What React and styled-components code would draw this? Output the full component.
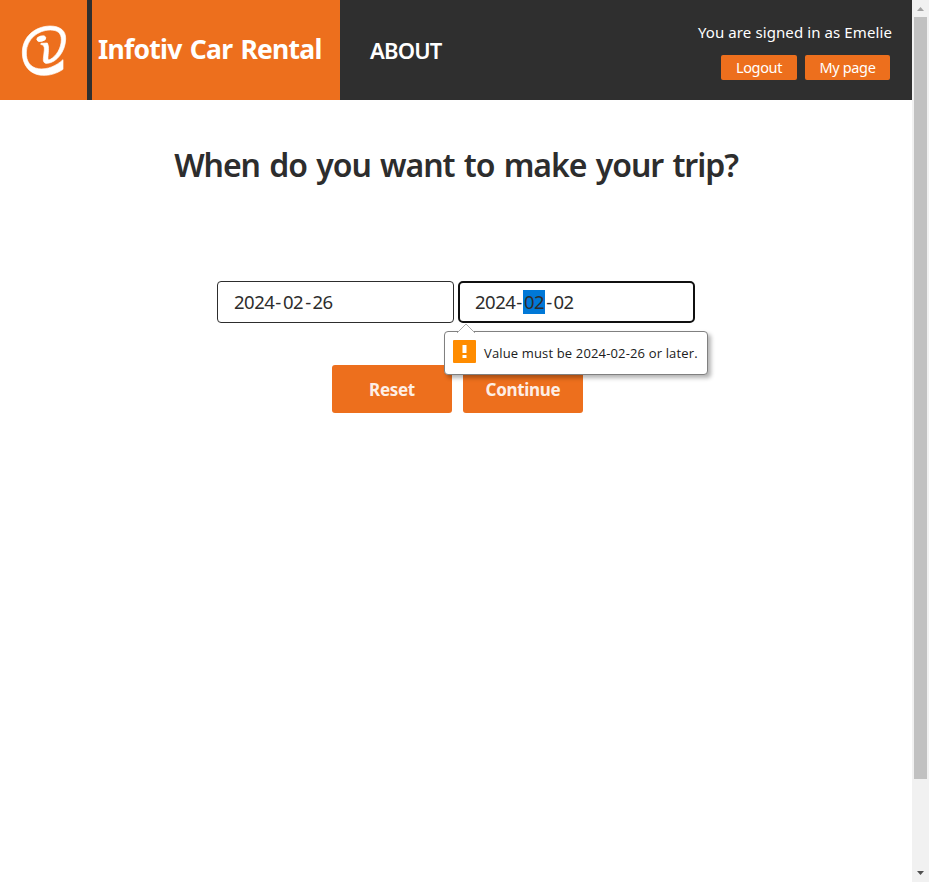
import React from "react";
import styled, { createGlobalStyle } from "styled-components";

const Global = createGlobalStyle`
  * { box-sizing: border-box; }
  body { margin: 0; background: #fff; overflow: hidden; }
  button { font: inherit; border: 0; padding: 0; margin: 0; }
`;

const Screen = styled.div`
  display: flex;
  width: 929px;
  height: 882px;
  font-family: "Trebuchet MS", "Noto Sans", sans-serif;
  color: #2d2d2d;
`;
const Page = styled.div`
  width: 912px;
  display: flex;
  flex-direction: column;
`;
const Header = styled.header`
  display: flex;
  height: 100px;
  background: #2f2f2f;
  color: #fff;
`;
const Logo = styled.div`
  width: 87px;
  height: 100px;
  margin-right: 5px;
  background: #ed6f1d;
  svg { display: block; }
`;
const Brand = styled.div`
  width: 248px;
  padding: 29px 0 0 6px;
  background: #ed6f1d;
`;
const Label = styled.span`
  display: block;
  white-space: nowrap;
  font-size: ${(p) => p.$size}px;
  line-height: ${(p) => p.$line}px;
  font-weight: ${(p) => p.$weight || 400};
  letter-spacing: ${(p) => p.$track || 0}px;
  word-spacing: ${(p) => p.$words || 0}px;
`;
const Nav = styled.nav`
  padding: 35px 0 0 30px;
  flex: 1;
`;
const Account = styled.div`
  display: flex;
  flex-direction: column;
  align-items: flex-end;
  padding: 22px 20px 0 0;
`;
const AccountActions = styled.div`
  display: flex;
  gap: 8px;
  margin: 13px 2px 0 0;
`;
const SmallButton = styled.button`
  display: flex;
  justify-content: center;
  align-items: center;
  width: ${(p) => p.$width}px;
  height: 25px;
  padding-bottom: 1px;
  border-radius: 2px;
  background: #ed6f1d;
  color: #fff;
`;
const Main = styled.main`
  display: flex;
  flex-direction: column;
  align-items: center;
`;
const Heading = styled.h1`
  margin: 45px 0 0;
  color: #2d2d2d;
`;
const Dates = styled.div`
  display: flex;
  gap: 4px;
  margin-top: 96px;
`;
const Field = styled.div`
  position: relative;
  display: flex;
  align-items: center;
  width: 237px;
  height: 42px;
  padding-left: ${(p) => (p.$focused ? 15 : 16)}px;
  border: ${(p) => (p.$focused ? "2px solid #101010" : "1px solid #2d2d2d")};
  border-radius: ${(p) => (p.$focused ? 5 : 4)}px;
`;
const DateText = styled.div`
  display: flex;
  font-size: 18.5px;
  line-height: 24px;
  letter-spacing: -0.5px;
`;
const Part = styled.span`
  width: ${(p) => p.$width}px;
  text-align: center;
  background: ${(p) => (p.$selected ? "#0078d7" : "transparent")};
`;
const Actions = styled.div`
  display: flex;
  gap: 11px;
  margin: 42px 0 0 3px;
`;
const BigButton = styled.button`
  display: flex;
  justify-content: center;
  align-items: center;
  width: 120px;
  height: 48px;
  padding-top: 2px;
  border-radius: 3px;
  background: #ed6f1d;
  color: #fdeee5;
`;
const Bubble = styled.div`
  position: absolute;
  z-index: 2;
  left: -16px;
  top: 48px;
  display: flex;
  align-items: flex-start;
  width: 264px;
  height: 44px;
  padding: 8px 0 0 8px;
  gap: 8px;
  border: 1px solid #808080;
  border-radius: 4px;
  background: #fff;
  color: #202020;
  font-family: "Segoe UI", "Open Sans", sans-serif;
  box-shadow: 3px 3px 4px rgba(0, 0, 0, 0.3);
`;
const Message = styled.div`
  padding-top: 4px;
`;
const Pointer = styled.svg`
  position: absolute;
  left: 12px;
  top: -9px;
`;
const Scrollbar = styled.div`
  display: flex;
  flex-direction: column;
  align-items: center;
  width: 17px;
  height: 882px;
  background: #f1f1f1;
`;
const Thumb = styled.div`
  width: 13px;
  height: 762px;
  margin-bottom: 86px;
  background: #c1c1c1;
`;

const DateValue = ({ year, month, day, selected }) => (
  <DateText>
    <Part $width={40}>{year}</Part>
    <Part $width={8}>-</Part>
    <Part $width={22} $selected={selected}>{month}</Part>
    <Part $width={8}>-</Part>
    <Part $width={21}>{day}</Part>
  </DateText>
);

export default function App() {
  return (
    <>
      <Global />
      <Screen>
        <Page>
          <Header>
            <Logo>
              <svg width="87" height="100" viewBox="0 0 261 300" fill="#fff" stroke="#fff" strokeWidth="2">
                <path d="M189 179V208C170 221 148 227 128 226C90 225 66 195 67 156C68 110 105 79 150 78C180 78 198 92 197 117C196 155 170 187 143 190C133 191 129 186 130 176L133 150C134 140 131 135 122 133L123 130L142 129C147 139 146 150 144 170C143 180 146 181 151 178C168 169 184 145 184 119C184 99 172 90 151 90C112 90 80 120 79 156C78 184 90 202 115 206C143 210 169 197 189 179Z" />
                <ellipse cx="124" cy="116" rx="14" ry="8" transform="rotate(-16 124 116)" />
              </svg>
            </Logo>
            <Brand>
              <Label $size={26.5} $line={40} $weight={700} $track={-0.75} $words={2}>Infotiv Car Rental</Label>
            </Brand>
            <Nav>
              <Label $size={22} $line={30} $weight={600} $track={-0.8}>ABOUT</Label>
            </Nav>
            <Account>
              <Label $size={15} $line={20} $track={0.1}>You are signed in as Emelie</Label>
              <AccountActions>
                <SmallButton $width={76}><Label $size={14.5} $line={20} $track={-0.35}>Logout</Label></SmallButton>
                <SmallButton $width={85}><Label $size={14.5} $line={20} $track={-0.35}>My page</Label></SmallButton>
              </AccountActions>
            </Account>
          </Header>
          <Main>
            <Heading><Label $size={32} $line={40} $weight={600} $track={-1.05} $words={2}>When do you want to make your trip?</Label></Heading>
            <Dates>
              <Field><DateValue year="2024" month="02" day="26" /></Field>
              <Field $focused>
                <DateValue year="2024" month="02" day="02" selected />
                <Bubble>
                  <Pointer width="18" height="10" viewBox="0 0 18 10">
                    <path d="M0 10L9 1L18 10" fill="#fff" stroke="#aaa" />
                  </Pointer>
                  <svg width="23" height="23" viewBox="0 0 23 23">
                    <rect width="23" height="23" rx="1" fill="#ff8c00" />
                    <path d="M9.5 5h4v8h-4zM9.5 15h4v3h-4z" fill="#fff" />
                  </svg>
                  <Message><Label $size={13} $line={18} $track={0.15}>Value must be 2024-02-26 or later.</Label></Message>
                </Bubble>
              </Field>
            </Dates>
            <Actions>
              <BigButton><Label $size={17} $line={24} $weight={700} $track={-0.3}>Reset</Label></BigButton>
              <BigButton><Label $size={17} $line={24} $weight={700} $track={-0.3}>Continue</Label></BigButton>
            </Actions>
          </Main>
        </Page>
        <Scrollbar>
          <svg width="17" height="17" viewBox="0 0 17 17"><path d="M5 11h7L8.5 7z" fill="#a3a3a3" /></svg>
          <Thumb />
          <svg width="17" height="17" viewBox="0 0 17 17"><path d="M5 6h7L8.5 10z" fill="#505050" /></svg>
        </Scrollbar>
      </Screen>
    </>
  );
}
